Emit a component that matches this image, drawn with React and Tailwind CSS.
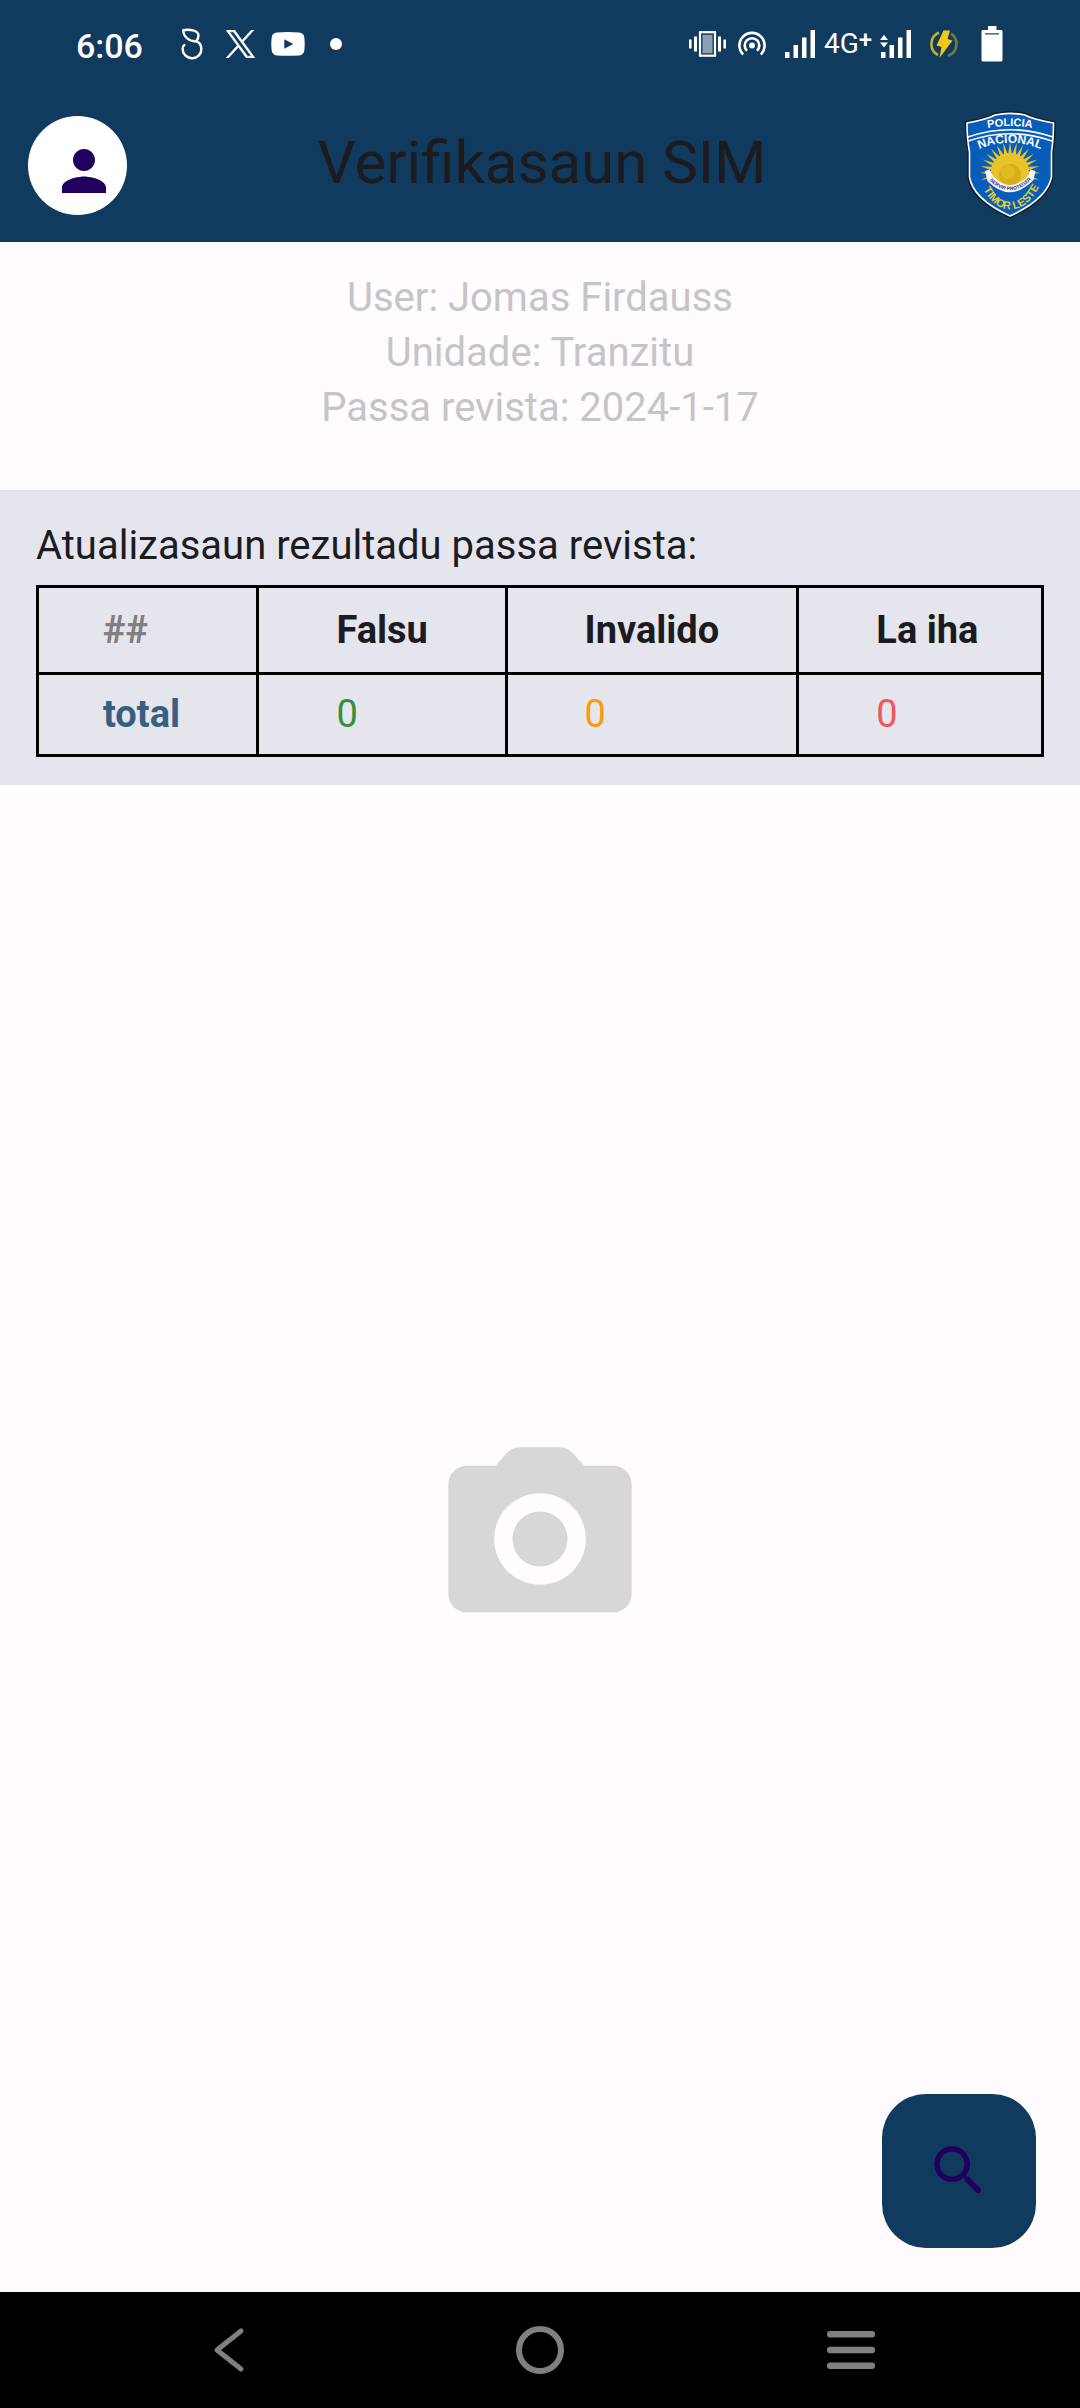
import React from "react";
import { MdPerson, MdPhotoCamera } from "react-icons/md";

const columns = ["Falsu", "Invalido", "La iha"];
const totals = [
  { name: "Falsu", value: 0, color: "text-[#388e3c]" },
  { name: "Invalido", value: 0, color: "text-[#fb9a0b]" },
  { name: "La iha", value: 0, color: "text-[#f2555a]" },
];

function LeafIcon() {
  return (
    <svg width="22" height="32" viewBox="0 0 22 32" fill="none" stroke="#fff" strokeWidth="2.4" strokeLinecap="round" strokeLinejoin="round">
      <path d="M2.2 2.2C8 1 17.500 2 17.500 7.500C17.500 9.800 16.600 11.600 15.200 13.200C8 13.600 2.600 9 2.200 2.200Z" />
      <path d="M15.200 13.200C18.600 14.500 20.300 17.500 20.300 21C20.300 26.500 16.200 30.200 11.200 30.200C5.500 30.200 1.600 26 1.600 21C1.600 19.200 2 17.800 3.400 17" />
    </svg>
  );
}

function XIcon() {
  return (
    <svg width="29" height="28" viewBox="0 0 24 24" fill="#fff" stroke="#fff" strokeWidth=".5" preserveAspectRatio="none">
      <path d="M14.258 10.152L23.176 0h-2.113l-7.747 8.813L7.133 0H0l9.352 13.328L0 23.973h2.113l8.176-9.309 6.531 9.309h7.133zm-2.895 3.293l-.949-1.328L2.875 1.560h3.246l6.086 8.523.945 1.328 7.910 11.078h-3.246z" />
    </svg>
  );
}

function VideoIcon() {
  return (
    <svg width="34" height="24" viewBox="0 0 34 24">
      <path fill="#fff" fillRule="evenodd" d="M6 .6Q17-.4 28 .6Q33 1 33.400 6Q34 12 33.400 18Q33 23 28 23.400Q17 24.300 6 23.400Q1 23 .6 18Q0 12 .6 6Q1 1 6 .6ZM13.300 7.300V16.700L22.300 12Z" />
    </svg>
  );
}

function VibrateIcon() {
  return (
    <svg width="38" height="26" viewBox="0 0 38 26">
      <g fill="#fff">
        <rect x="0" y="8.500" width="2.600" height="9" />
        <rect x="5" y="5.500" width="3" height="15" />
        <rect x="29" y="5.500" width="3" height="15" />
        <rect x="34.400" y="8.500" width="2.600" height="9" />
      </g>
      <rect x="11" y="1.200" width="15" height="23.500" fill="#103b5f" stroke="#fff" strokeWidth="2.200" />
      <rect x="13.500" y="3.800" width="10" height="18.500" fill="#8c9fb4" />
    </svg>
  );
}

function HotspotIcon() {
  return (
    <svg width="30" height="26" viewBox="0 0 30 26" fill="none" stroke="#fff" strokeWidth="2.600">
      <path d="M6.200 23.500A12.600 12.600 0 1 1 23.800 23.500" />
      <path d="M10 19.800A7.300 7.300 0 1 1 20 19.800" />
      <circle cx="15" cy="14.500" r="3" fill="#fff" stroke="none" />
    </svg>
  );
}

function SignalIcon({ data }) {
  return (
    <svg width="32" height="28" viewBox="0 0 32 28" fill="#fff">
      <rect x="1" y="22" width="4.500" height="6" />
      <rect x="9.500" y="15" width="4.500" height="13" />
      <rect x="18" y="7.500" width="4.500" height="20.500" />
      <rect x="26.500" y="0" width="4.500" height="28" />
      {data && <path d="M0 10L4 4.800L8 10ZM0 12.500L4 17.500L8 12.500Z" />}
    </svg>
  );
}

function BoltIcon() {
  return (
    <svg width="30" height="30" viewBox="0 0 30 30">
      <g fill="none" stroke="#c8ad2a" strokeWidth="2.600">
        <path d="M9 26A12.500 12.500 0 0 1 10 3.500" />
        <path d="M22 4.600A12.500 12.500 0 0 1 19 26.800" opacity=".55" />
      </g>
      <path fill="#f2c71c" d="M14.500 1.500H21L18.500 10L23.500 11.500L10.500 29L12.500 18L7.500 16.500Z" />
    </svg>
  );
}

function BatteryIcon() {
  return (
    <svg width="22" height="36" viewBox="0 0 22 36">
      <path fill="#fff" d="M7 0H15.500V4H20Q21.500 4 21.500 5.500V34Q21.500 35.500 20 35.500H2Q.5 35.500 .5 34V5.500Q.5 4 2 4H7Z" />
      <rect x="4" y="7" width="14" height="1.600" fill="#54708c" />
    </svg>
  );
}

const rays = Array.from({ length: 17 }, (_, i) => -195 + (i * 210) / 16);

function PoliceBadge() {
  return (
    <svg className="justify-self-end" width="92" height="110" viewBox="26 15 92 110" role="img" aria-label="Policia Nacional Timor Leste">
      <defs>
        <path id="arcPolicia" d="M40 35.500Q72 26.500 104 35.500" />
        <path id="arcNacional" d="M34 57.500Q72 38 110 57.500" />
        <path id="arcRibbon" d="M49 83Q72 108 96 82" />
        <path id="arcTimor" d="M41 86Q54 115 72 114Q92 115 105 83" />
      </defs>
      <path d="M27 26Q48 23 56 18Q72 14.500 88 18Q96 23 117.500 26Q118 44 115.500 57V82Q112 105 72 123.500Q32 105 29.500 82V57Q27 44 27 26Z" fill="#111a22" />
      <path d="M29 28Q50 24 57 20Q72 16.800 87 20Q94 24 115.500 28Q115.500 44 113.500 57V82Q109 104 72 121Q35 104 31.500 82V57Q29 44 29 28Z" fill="#075db9" stroke="#fff" strokeWidth="1.600" />
      <path d="M30 42Q72 27.500 115 42M30.500 46Q72 31.500 114 46" fill="none" stroke="#fff" strokeWidth="1.600" />
      {rays.map((a) => (
        <path key={a} d="M89 75L102 77L89 79Z" fill="#e6c32b" transform={`rotate(${a} 72 77)`} />
      ))}
      <circle cx="72" cy="77" r="19" fill="#e9c32a" />
      <circle cx="72" cy="80" r="11" fill="#d9ad19" />
      <circle cx="70" cy="77" r="7" fill="#e2b925" />
      <path d="M47 76L51.500 74.500L55 81Q72 99 90 81L92.500 74.500L97.500 76L95.500 85Q72 109 49.500 86Z" fill="#f6f6fb" />
      <g fontFamily="Liberation Sans, Arial, sans-serif" fontWeight="700" textAnchor="middle">
        <text fontSize="11" fill="#fff"><textPath href="#arcPolicia" startOffset="50%">POLICIA</textPath></text>
        <text fontSize="12" fill="#fff"><textPath href="#arcNacional" startOffset="50%">NACIONAL</textPath></text>
        <text fontSize="5" fill="#3a3489"><textPath href="#arcRibbon" startOffset="50%">SERVIR PROTEGER</textPath></text>
        <text fontSize="11" fill="#e3ce2e"><textPath href="#arcTimor" startOffset="50%">TIMOR LESTE</textPath></text>
      </g>
    </svg>
  );
}

function SearchIcon() {
  return (
    <svg width="66" height="66" viewBox="0 0 24 24" fill="#21005d">
      <path d="M15.500 14h-.79l-.28-.27c1.200-1.400 1.820-3.310 1.480-5.340-.47-2.780-2.790-5-5.590-5.340-4.230-.52-7.790 3.040-7.270 7.270.34 2.800 2.560 5.120 5.340 5.590 2.030.34 3.940-.28 5.340-1.480l.27.28v.79l4.250 4.250c.41.41 1.080.41 1.490 0 .41-.41.41-1.080 0-1.490L15.500 14zm-6 0C7.010 14 5 11.990 5 9.500S7.010 5 9.500 5 14 7.010 14 9.500 11.990 14 9.500 14z" />
    </svg>
  );
}

function CameraIcon() {
  return (
    <svg width="220" height="220" viewBox="0 0 24 24" fill="#d8d6d8">
      <circle cx="12" cy="12" r="3" />
      <path fillRule="evenodd" d="M9.800 2c-.56 0-1.090.24-1.470.65L7.170 4H4c-1.100 0-2 .9-2 2v12c0 1.100.9 2 2 2h16c1.100 0 2-.9 2-2V6c0-1.100-.9-2-2-2h-3.170l-1.240-1.350A1.990 1.990 0 0 0 14.120 2H9.800zM12 17a5 5 0 1 1 0-10 5 5 0 0 1 0 10z" />
    </svg>
  );
}

function Slot({ children }) {
  return <span className="flex w-12 items-center justify-center">{children}</span>;
}

function StatusBar() {
  return (
    <div className="flex h-22 items-center justify-between pr-16 pl-19 text-white">
      <div className="flex items-center">
        <span className="w-[92px] pt-1 text-[34px] leading-10 font-medium">6:06</span>
        <Slot><LeafIcon /></Slot>
        <Slot><XIcon /></Slot>
        <Slot><VideoIcon /></Slot>
        <Slot><span className="size-3 rounded-full bg-white" /></Slot>
      </div>
      <div className="flex items-center">
        <span className="flex w-10 justify-center"><VibrateIcon /></span>
        <Slot><HotspotIcon /></Slot>
        <Slot><SignalIcon /></Slot>
        <Slot>
          <span className="flex items-start text-[28px] leading-8">
            4G<span className="text-[24px] leading-6 font-medium">+</span>
          </span>
        </Slot>
        <Slot><SignalIcon data /></Slot>
        <Slot><BoltIcon /></Slot>
        <Slot><BatteryIcon /></Slot>
      </div>
    </div>
  );
}

export default function App() {
  return (
    <div className="flex min-h-screen flex-col bg-[#fffbff] font-['Roboto',sans-serif] text-[#1c1b1f]">
      <header className="bg-[#103b5f]">
        <StatusBar />
        <div className="grid h-[154px] grid-cols-[1fr_auto_1fr] items-center pr-6 pl-7">
          <button type="button" aria-label="Profile" className="flex size-[99px] items-center justify-center rounded-full bg-white pt-3 pl-3 text-[#21005d]">
            <MdPerson size={66} />
          </button>
          <h1 className="pb-1 text-[60px] leading-[76px]">Verifikasaun SIM</h1>
          <PoliceBadge />
        </div>
      </header>

      <section className="pt-7 pb-[55px] text-center text-[40px] leading-[55px] text-[#c5c4c7]">
        <p>User: Jomas Firdauss</p>
        <p>Unidade: Tranzitu</p>
        <p>Passa revista: 2024-1-17</p>
      </section>

      <section className="bg-[#e5e6ed] px-9 pt-7 pb-7">
        <h2 id="results" className="pb-3 text-[40px] leading-[55px]">Atualizasaun rezultadu passa revista:</h2>
        <table aria-labelledby="results" className="w-full border-collapse text-left text-[38px] leading-[55px]">
          <thead>
            <tr className="h-[87px]">
              <th scope="col" className="border-3 border-black pr-[77px] pl-16 font-bold text-[#808080]">##</th>
              {columns.map((c) => (
                <th key={c} scope="col" className="border-3 border-black pr-[74px] pl-[77px] font-bold whitespace-nowrap last:pr-15">{c}</th>
              ))}
            </tr>
          </thead>
          <tbody>
            <tr className="h-[82px]">
              <th scope="row" className="border-3 border-black pr-[74px] pl-16 font-bold text-[#375f80]">total</th>
              {totals.map((t) => (
                <td key={t.name} className="border-3 border-black pr-[74px] pl-[77px] last:pr-15">
                  <span className={t.color}>{t.value}</span>
                </td>
              ))}
            </tr>
          </tbody>
        </table>
      </section>

      <main className="flex flex-1 items-center justify-center">
        <CameraIcon />
      </main>

      <button type="button" aria-label="Search" className="fixed right-11 bottom-40 flex size-[154px] items-center justify-center rounded-[44px] bg-[#103b5f]">
        <SearchIcon />
      </button>

      <nav className="flex h-29 items-center justify-center gap-[215px] bg-black">
        <button type="button" aria-label="Back" className="flex w-24 justify-center">
          <svg width="32" height="46" viewBox="0 0 32 46" fill="none" stroke="#808080" strokeWidth="5" strokeLinecap="round" strokeLinejoin="round">
            <path d="M28 4L4 23L28 42" />
          </svg>
        </button>
        <button type="button" aria-label="Home" className="flex w-24 justify-center">
          <span className="size-12 rounded-full border-6 border-[#808080]" />
        </button>
        <button type="button" aria-label="Recent apps" className="flex w-24 justify-center">
          <svg width="50" height="38" viewBox="0 0 50 38" fill="#808080">
            <rect x="1" y="0" width="48" height="6.500" rx="3" />
            <rect x="1" y="15.700" width="48" height="6.500" rx="3" />
            <rect x="1" y="31.500" width="48" height="6.500" rx="3" />
          </svg>
        </button>
      </nav>
    </div>
  );
}
